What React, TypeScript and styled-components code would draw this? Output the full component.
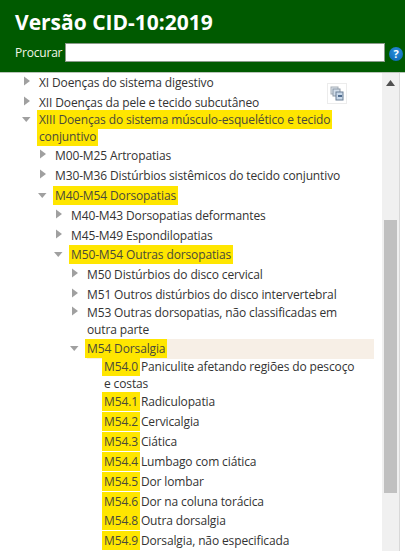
import React from "react";
import styled, { createGlobalStyle } from "styled-components";

const GlobalStyle = createGlobalStyle`
  html, body {
    margin: 0;
    padding: 0;
    background: #fff;
    overflow: hidden;
  }
`;

const Page = styled.div`
  width: 405px;
  height: 551px;
  display: flex;
  flex-direction: column;
  overflow: hidden;
  font-family: "Open Sans", "Liberation Sans", sans-serif;
`;

const Header = styled.header`
  height: 73px;
  flex: none;
  box-sizing: border-box;
  padding: 8px 2px 0 15px;
  background: #005a00;
  border-bottom: 1px solid #b9c4b9;
`;

const Title = styled.h1`
  margin: 0;
  font-size: 21px;
  line-height: 28px;
  font-weight: 700;
  color: #fff;
`;

const SearchRow = styled.div`
  display: flex;
  align-items: center;
  margin-top: 7px;
`;

const SearchLabel = styled.label`
  width: 50px;
  flex: none;
  font-size: 12px;
  letter-spacing: -0.2px;
  color: #f2f7e8;
`;

const SearchInput = styled.input`
  width: 320px;
  height: 19px;
  flex: none;
  box-sizing: border-box;
  border: 1px solid #8a9a8a;
  background: #fff;
  padding: 0;
`;

const HelpIcon = styled.span`
  width: 14px;
  height: 14px;
  flex: none;
  margin: 2px 0 0 4px;
  border-radius: 50%;
  background: radial-gradient(circle at 50% 35%, #2a8fdc, #0a62ad);
  color: #fff;
  font-size: 11px;
  line-height: 14px;
  font-weight: 700;
  text-align: center;
`;

const Body = styled.main`
  flex: 1;
  display: flex;
  position: relative;
  min-height: 0;
`;

const Tree = styled.ul`
  flex: 1;
  margin: 0;
  padding: 0;
  list-style: none;
  overflow: hidden;
  color: #333;
  font-size: 12px;
  line-height: 17px;
  letter-spacing: -0.13px;
`;

const Row = styled.li<{ $indent: number; $gap: number; $active?: boolean }>`
  position: relative;
  box-sizing: border-box;
  width: ${(p) => (p.$active ? 374 : 355)}px;
  padding-left: ${(p) => p.$indent}px;
  padding-top: ${(p) => p.$gap}px;
`;

const RowText = styled.span<{ $active?: boolean }>`
  display: block;
  background: ${(p) => (p.$active ? "#f7efe6" : "transparent")};
  box-shadow: ${(p) => (p.$active ? "0 -1px 0 #f7efe6, 0 2px 0 #f7efe6" : "none")};
`;

const Arrow = styled.svg<{ $indent: number; $gap: number }>`
  position: absolute;
  top: ${(p) => p.$gap}px;
  left: ${(p) => p.$indent - 19}px;
  width: 12px;
  height: 12px;
  fill: #a0a0a0;
`;

const Mark = styled.mark`
  background: #ffe600;
  color: #4a4a3a;
  padding: 1px 2px;
  margin: 0 -2px;
  box-decoration-break: clone;
  -webkit-box-decoration-break: clone;
`;

const CollapseAll = styled.button`
  position: absolute;
  top: 10px;
  left: 327px;
  width: 20px;
  height: 21px;
  padding: 2px;
  border: 1px solid #ececec;
  background: #fff;
`;

const Scrollbar = styled.div`
  width: 17px;
  margin-right: 5px;
  flex: none;
  display: flex;
  flex-direction: column;
  align-items: center;
  background: #f0f0f0;
  border-right: 1px solid #d8d8d8;
`;

const ScrollArrow = styled.svg`
  width: 9px;
  height: 6px;
  margin-top: 7px;
  fill: #505050;
`;

const ScrollThumb = styled.div`
  width: 13px;
  height: 273px;
  margin-top: 134px;
  background: #c0c0c0;
`;

type Item = {
  indent: number;
  gap: number;
  text?: string;
  mark?: string;
  open?: boolean;
  leaf?: boolean;
  active?: boolean;
};

const ITEMS: Item[] = [
  { indent: 39, gap: 1, text: "XI Doenças do sistema digestivo" },
  { indent: 39, gap: 3, text: "XII Doenças da pele e tecido subcutâneo" },
  { indent: 39, gap: 0, mark: "XIII Doenças do sistema músculo-esquelético e tecido conjuntivo", open: true },
  { indent: 55, gap: 2, text: "M00-M25 Artropatias" },
  { indent: 55, gap: 3, text: "M30-M36 Distúrbios sistêmicos do tecido conjuntivo" },
  { indent: 55, gap: 3, mark: "M40-M54 Dorsopatias", open: true },
  { indent: 71, gap: 3, text: "M40-M43 Dorsopatias deformantes" },
  { indent: 71, gap: 3, text: "M45-M49 Espondilopatias" },
  { indent: 71, gap: 2, mark: "M50-M54 Outras dorsopatias", open: true },
  { indent: 87, gap: 3, text: "M50 Distúrbios do disco cervical" },
  { indent: 87, gap: 3, text: "M51 Outros distúrbios do disco intervertebral" },
  { indent: 87, gap: 1, text: "M53 Outras dorsopatias, não classificadas em outra parte" },
  { indent: 87, gap: 2, mark: "M54 Dorsalgia", open: true, active: true },
  { indent: 104, gap: 1, mark: "M54.0", text: "Paniculite afetando regiões do pescoço e costas", leaf: true },
  { indent: 104, gap: 1, mark: "M54.1", text: "Radiculopatia", leaf: true },
  { indent: 104, gap: 3, mark: "M54.2", text: "Cervicalgia", leaf: true },
  { indent: 104, gap: 3, mark: "M54.3", text: "Ciática", leaf: true },
  { indent: 104, gap: 3, mark: "M54.4", text: "Lumbago com ciática", leaf: true },
  { indent: 104, gap: 3, mark: "M54.5", text: "Dor lombar", leaf: true },
  { indent: 104, gap: 3, mark: "M54.6", text: "Dor na coluna torácica", leaf: true },
  { indent: 104, gap: 2, mark: "M54.8", text: "Outra dorsalgia", leaf: true },
  { indent: 104, gap: 3, mark: "M54.9", text: "Dorsalgia, não especificada", leaf: true },
];

const App: React.FC = () => (
  <Page>
    <GlobalStyle />
    <Header>
      <Title>Versão CID-10:2019</Title>
      <SearchRow>
        <SearchLabel htmlFor="q">Procurar</SearchLabel>
        <SearchInput id="q" type="text" />
        <HelpIcon>?</HelpIcon>
      </SearchRow>
    </Header>
    <Body>
      <Tree>
        {ITEMS.map((item, i) => (
          <Row key={i} $indent={item.indent} $gap={item.gap} $active={item.active}>
            {!item.leaf && (
              <Arrow $indent={item.indent} $gap={item.gap} viewBox="0 0 12 12">
                <path d={item.open ? "M2 6h8.5l-4.25 5z" : "M4 2.5l6 4.5-6 4.5z"} />
              </Arrow>
            )}
            <RowText $active={item.active}>
              {item.mark && <Mark>{item.mark}</Mark>}
              {item.mark && item.text && " "}
              {item.text}
            </RowText>
          </Row>
        ))}
      </Tree>
      <CollapseAll aria-label="Recolher tudo">
        <svg width="14" height="15" viewBox="0 0 14 15">
          <rect x="1" y="1" width="7" height="7" fill="#dfe6ee" stroke="#a5adb5" />
          <rect x="3" y="3" width="7" height="7" fill="#d3deea" stroke="#8c98a5" />
          <rect x="6" y="6" width="7" height="8" fill="#c9d9ea" stroke="#6b7f95" />
          <path d="M8 10h4" stroke="#1c3d66" strokeWidth="1.4" />
        </svg>
      </CollapseAll>
      <Scrollbar>
        <ScrollArrow viewBox="0 0 9 6">
          <path d="M4.5 0L9 6H0z" />
        </ScrollArrow>
        <ScrollThumb />
      </Scrollbar>
    </Body>
  </Page>
);

export default App;
